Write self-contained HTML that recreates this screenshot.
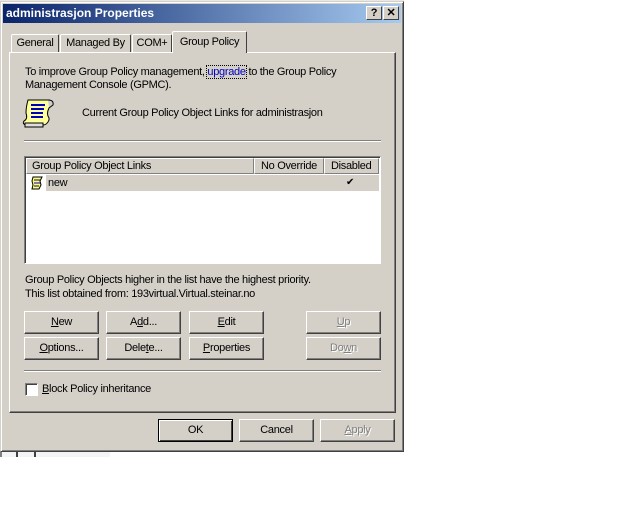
<!DOCTYPE html>
<html><head><style>
*{margin:0;padding:0;box-sizing:border-box}
body{width:640px;height:512px;background:#fff;position:relative;overflow:hidden;font-family:"Liberation Sans",sans-serif;font-size:11px;color:#000;letter-spacing:-0.3px}
.a{position:absolute}
.dlg{left:0;top:1px;width:404px;height:451px;background:#d4d0c8;border:1px solid;border-color:#d4d0c8 #404040 #404040 #d4d0c8;box-shadow:inset 1px 1px #fff,inset -1px -1px #808080}
.title{left:3px;top:4px;width:398px;height:19px;background:linear-gradient(to right,#0a246a,#a6caf0);color:#fff;font-weight:bold;font-size:12px;line-height:19px;padding-left:3px;letter-spacing:0}
.tb{width:16px;height:14px;background:#d4d0c8;border:1px solid;border-color:#fff #404040 #404040 #fff;color:#000;font-weight:bold;font-size:11px;text-align:center;line-height:12px}
.tab{background:#d4d0c8;border:1px solid;border-bottom:none;border-color:#fff #404040 #404040 #fff;border-radius:2px 2px 0 0;text-align:center;line-height:17px}
.panel{left:9px;top:52px;width:387px;height:361px;border:1px solid;border-color:#fff #404040 #404040 #fff;box-shadow:inset -1px -1px #808080}
.btn{width:75px;height:23px;border:1px solid;border-color:#fff #404040 #404040 #fff;box-shadow:inset -1px -1px #808080;text-align:center;line-height:20px;background:#d4d0c8}
.dis{color:#808080;text-shadow:1px 1px #fff}
.sep{height:2px;border-top:1px solid #808080;border-bottom:1px solid #fff}
u{text-decoration:underline}
</style></head><body>
<div class="a" style="left:0;top:0;width:404px;height:2px;background:#e8e8e8"></div>
<div class="a" style="left:0;top:452px;width:110px;height:5px;background:#f4f4f4;border-left:2px solid #808080"></div>
<div class="a" style="left:16px;top:452px;width:2px;height:5px;background:#404040"></div>
<div class="a" style="left:34px;top:452px;width:2px;height:5px;background:#404040"></div>
<div class="a dlg"></div>
<div class="a title">administrasjon Properties</div>
<div class="a tb" style="left:366px;top:6px">?</div>
<div class="a tb" style="left:383px;top:6px">✕</div>

<div class="a tab" style="left:11px;top:34px;width:48px;height:19px">General</div>
<div class="a tab" style="left:60px;top:34px;width:71px;height:19px">Managed By</div>
<div class="a tab" style="left:132px;top:34px;width:40px;height:19px">COM+</div>
<div class="a panel"></div>
<div class="a tab" style="left:172px;top:31px;width:75px;height:22px;line-height:20px;z-index:2">Group Policy</div>

<div class="a" style="left:25px;top:66px;line-height:13px">To improve Group Policy management, <span style="color:#0000c0;outline:1px dotted #000">upgrade</span> to the Group Policy<br>Management Console (GPMC).</div>
<svg class="a" style="left:22px;top:96px" width="36" height="34" viewBox="0 0 36 34">
<path d="M6 4h20q4 0 4 4l-3 4q-3 6 0 10v2q-2 5-6 5H4q-4-1-2-4 4-2 2-8 0-6 2-13z" fill="#ffff99" stroke="#000"/>
<path d="M26 4q6 0 5 5l-4 3" fill="#ccc" stroke="#000"/>
<path d="M3 27h18v4H3z" fill="#ddd" stroke="#000"/>
<path d="M9 9h14M9 13h13M9 17h12M9 21h12" stroke="#0000c0" stroke-width="2"/>
</svg>
<div class="a" style="left:82px;top:107px">Current Group Policy Object Links for administrasjon</div>
<div class="a sep" style="left:24px;top:140px;width:357px"></div>

<div class="a" style="left:24px;top:156px;width:357px;height:108px;background:#fff;border:1px solid;border-color:#808080 #fff #fff #808080;box-shadow:inset 1px 1px #404040"></div>
<div class="a" style="left:26px;top:158px;width:228px;height:16px;background:#d4d0c8;border:1px solid;border-color:#fff #808080 #808080 #fff;line-height:14px;padding-left:5px">Group Policy Object Links</div>
<div class="a" style="left:254px;top:158px;width:70px;height:16px;background:#d4d0c8;border:1px solid;border-color:#fff #808080 #808080 #fff;line-height:14px;padding-left:6px">No Override</div>
<div class="a" style="left:324px;top:158px;width:55px;height:16px;background:#d4d0c8;border:1px solid;border-color:#fff #808080 #808080 #fff;line-height:14px;padding-left:6px">Disabled</div>
<div class="a" style="left:46px;top:175px;width:333px;height:16px;background:#d4d0c8;line-height:16px;padding-left:2px">new</div>
<div class="a" style="left:346px;top:175px;line-height:16px;font-size:10px">✔</div>
<svg class="a" style="left:30px;top:175px" width="16" height="16" viewBox="0 0 16 16"><path d="M3 2h9l-2 4 1 4-2 4H2l1-4-1-4z" fill="#ffff66" stroke="#000"/><path d="M4 5h6M4 8h6M4 11h5" stroke="#0000c0"/></svg>

<div class="a" style="left:25px;top:273px;line-height:14px">Group Policy Objects higher in the list have the highest priority.<br>This list obtained from: 193virtual.Virtual.steinar.no</div>

<div class="a btn" style="left:24px;top:311px"><u>N</u>ew</div>
<div class="a btn" style="left:106px;top:311px">A<u>d</u>d...</div>
<div class="a btn" style="left:189px;top:311px"><u>E</u>dit</div>
<div class="a btn dis" style="left:306px;top:311px"><u>U</u>p</div>
<div class="a btn" style="left:24px;top:337px"><u>O</u>ptions...</div>
<div class="a btn" style="left:106px;top:337px">Dele<u>t</u>e...</div>
<div class="a btn" style="left:189px;top:337px"><u>P</u>roperties</div>
<div class="a btn dis" style="left:306px;top:337px">Do<u>w</u>n</div>
<div class="a sep" style="left:24px;top:370px;width:357px"></div>
<div class="a" style="left:25px;top:383px;width:13px;height:13px;background:#fff;border:1px solid;border-color:#808080 #fff #fff #808080;box-shadow:inset 1px 1px #404040"></div>
<div class="a" style="left:42px;top:383px"><u>B</u>lock Policy inheritance</div>

<div class="a btn" style="left:158px;top:419px;border:1px solid #000;box-shadow:inset 1px 1px #fff,inset -1px -1px #404040">OK</div>
<div class="a btn" style="left:239px;top:419px">Cancel</div>
<div class="a btn dis" style="left:320px;top:419px"><u>A</u>pply</div>
</body></html>
